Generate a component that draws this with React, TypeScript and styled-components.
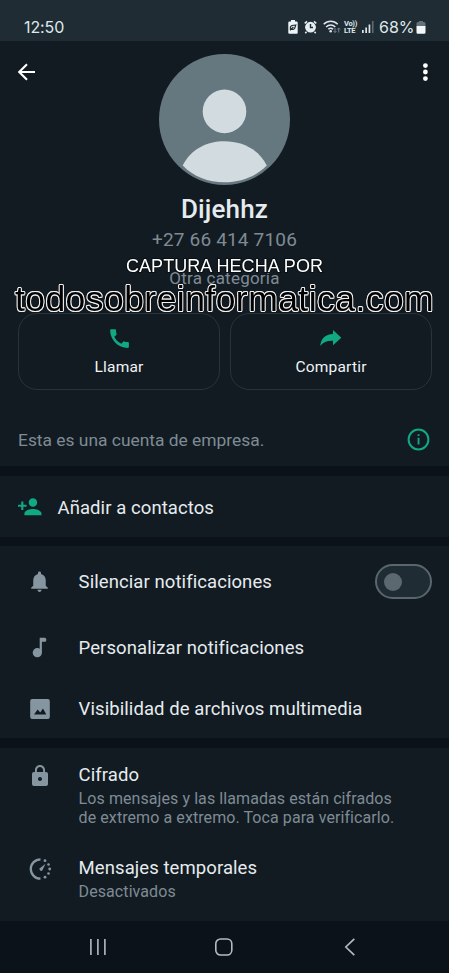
import React from "react";
import styled, { createGlobalStyle } from "styled-components";
import { MdCall, MdPersonAdd, MdNotifications, MdLock } from "react-icons/md";

const color = {
  panel: "#121b22",
  gap: "#0b1219",
  status: "#202c33",
  green: "#11a884",
  text: "#e6ebef",
  muted: "#7f8b94",
  icon: "#8696a0",
};

const GlobalStyle = createGlobalStyle`
  * { box-sizing: border-box; }
  body { margin: 0; background: ${color.gap}; font-family: Roboto, "Noto Sans", sans-serif; }
  svg { display: block; flex: none; }
`;

const Screen = styled.div`
  position: relative;
  width: 449px;
  height: 973px;
  overflow: hidden;
  display: flex;
  flex-direction: column;
  background: ${color.gap};
`;

const StatusBar = styled.header`
  height: 41px;
  flex: none;
  padding: 12px 23px 0 24px;
  display: flex;
  justify-content: space-between;
  align-items: flex-start;
  background: ${color.status};
  color: #dfe8ec;
`;

const Clock = styled.span`
  font: 400 16px/30px Inter, sans-serif;
  letter-spacing: -0.1px;
`;

const StatusIcons = styled.div`
  display: flex;
  align-items: center;
  height: 30px;
`;

const StatusSlot = styled.span<{ $gap: number }>`
  display: flex;
  margin-left: ${(p) => p.$gap}px;
`;

const Volte = styled.span`
  display: flex;
  flex-direction: column;
  width: 14px;
  margin-left: 3px;
  font: 700 7.5px/7px Roboto, sans-serif;
  letter-spacing: -0.3px;
  white-space: nowrap;
`;

const Percent = styled.span`
  margin-left: 5px;
  width: 36px;
  font: 400 16px/30px Inter, sans-serif;
`;

const Profile = styled.section`
  height: 425px;
  flex: none;
  padding-top: 13px;
  display: flex;
  flex-direction: column;
  align-items: center;
  background: ${color.panel};
`;

const ProfileTop = styled.div`
  width: 100%;
  display: grid;
  grid-template-columns: 1fr 131px 1fr;
  padding: 0 17px 0 16px;
`;

const IconButton = styled.button<{ $end?: boolean }>`
  width: 20px;
  height: 20px;
  margin-top: 8px;
  padding: 0;
  border: 0;
  background: none;
  justify-self: ${(p) => (p.$end ? "end" : "start")};
`;

const Name = styled.h1`
  margin: 10px 0 0;
  font-size: 26px;
  font-weight: 500;
  line-height: 28px;
  letter-spacing: 0.15px;
  color: ${color.text};
`;

const Phone = styled.div`
  margin-top: 5px;
  font-size: 19px;
  line-height: 24px;
  letter-spacing: 0.18px;
  color: ${color.muted};
`;

const Category = styled.div`
  margin-top: 15px;
  font-size: 17px;
  line-height: 22px;
  letter-spacing: 0.22px;
  color: ${color.muted};
`;

const Actions = styled.div`
  width: 100%;
  margin-top: 24px;
  padding: 0 17px 0 18px;
  display: grid;
  grid-template-columns: 1fr 1fr;
  gap: 10px;
`;

const ActionCard = styled.button`
  height: 77px;
  padding: 11px 0 0;
  display: flex;
  flex-direction: column;
  align-items: center;
  border: 1px solid #28333a;
  border-radius: 19px;
  background: transparent;
  color: ${color.green};
`;

const ActionIcon = styled.span`
  height: 26px;
  display: flex;
  align-items: center;
`;

const ActionLabel = styled.span`
  margin-top: 5px;
  font: 400 15.5px/22px Roboto, sans-serif;
  letter-spacing: 0.2px;
  color: #f0f4f7;
`;

const BusinessNote = styled.div`
  width: 100%;
  height: 51px;
  margin-top: 24px;
  padding: 0 19px 0 18px;
  display: flex;
  align-items: center;
  justify-content: space-between;
  font-size: 17.4px;
  color: ${color.muted};
`;

const Section = styled.section<{ $height: number; $gap: number }>`
  height: ${(p) => p.$height}px;
  margin-top: ${(p) => p.$gap}px;
  flex: none;
  display: flex;
  flex-direction: column;
  background: ${color.panel};
`;

const Title = styled.span`
  font-size: 18.5px;
  line-height: 24px;
  letter-spacing: 0.08px;
  white-space: nowrap;
  color: ${color.text};
`;

const ContactRow = styled.div`
  flex: 1;
  display: flex;
  align-items: center;
  padding-left: 17px;
  gap: 15px;
  color: ${color.green};
  > ${Title} { padding-top: 2px; }
`;

const SettingRow = styled.div<{ $height: number }>`
  height: ${(p) => p.$height}px;
  flex: none;
  padding: 0 17px 0 26px;
  display: grid;
  grid-template-columns: 27px 1fr auto;
  column-gap: 25.6px;
  align-items: center;
  color: ${color.icon};
`;

const DetailRow = styled.div<{ $top: number; $iconTop: number }>`
  margin-top: ${(p) => p.$top}px;
  padding-left: 26px;
  display: grid;
  grid-template-columns: 27px 1fr;
  column-gap: 25.6px;
  color: ${color.icon};
  > :first-child { margin-top: ${(p) => p.$iconTop}px; }
`;

const IconCell = styled.span`
  display: flex;
  justify-content: center;
`;

const Detail = styled.div<{ $gap: number }>`
  margin-top: ${(p) => p.$gap}px;
  font-size: 16px;
  line-height: 19.3px;
  letter-spacing: 0.08px;
  white-space: nowrap;
  color: ${color.muted};
`;

const Toggle = styled.button`
  width: 57px;
  height: 35px;
  padding: 0 0 0 7px;
  display: flex;
  align-items: center;
  border: 2px solid #59666d;
  border-radius: 18px;
  background: #1f2c33;
`;

const Knob = styled.span`
  width: 18px;
  height: 18px;
  border-radius: 50%;
  background: #5b6870;
`;

const NavBar = styled.nav`
  height: 52px;
  flex: none;
  padding: 0 89px 0 88px;
  display: flex;
  align-items: center;
  justify-content: space-between;
`;

const Watermark = styled.div`
  position: absolute;
  left: 0;
  top: 256px;
  width: 449px;
  display: flex;
  flex-direction: column;
  align-items: center;
  font-family: "Liberation Sans", Arial, sans-serif;
  white-space: nowrap;
  paint-order: stroke fill;
  pointer-events: none;
  will-change: transform;
`;

const Credit = styled.span`
  font-size: 18px;
  line-height: 21px;
  letter-spacing: 0.06px;
  color: #fff;
  -webkit-text-stroke: 2px #0a0f13;
`;

const Site = styled.span`
  margin-top: 2px;
  font-size: 35.5px;
  line-height: 40px;
  letter-spacing: 0.45px;
  color: #000;
  -webkit-text-stroke: 1.2px #000;
  text-shadow:
    1px 0 #f2f2f2, -1px 0 #f2f2f2, 0 1px #f2f2f2, 0 -1px #f2f2f2,
    0.7px 0.7px #f2f2f2, -0.7px 0.7px #f2f2f2, 0.7px -0.7px #f2f2f2, -0.7px -0.7px #f2f2f2;
`;

const BatterySaverIcon = () => (
  <svg width="10" height="14" viewBox="0 0 10 14">
    <path d="M3 0h4v1.5h1.5A1.2 1.2 0 0 1 9.7 2.7v10a1 1 0 0 1-1 1H1.3a1 1 0 0 1-1-1v-10a1.2 1.2 0 0 1 1.2-1.2H3z" fill="#edf4f7" />
    <path d="M7.8 5C4 5 2 6 2.3 8.3c.2 1.5 3.5 1.5 4.4-.1C7.3 7.2 7.2 6 7.8 5ZM2 10.2 5.4 7" fill="none" stroke={color.status} strokeWidth="1.2" />
  </svg>
);

const AlarmIcon = () => (
  <svg width="13" height="14" viewBox="0 0 13 14" fill="none">
    <circle cx="6.5" cy="7.2" r="5.4" fill="#e4edf1" />
    <path d="M6.5 4v3.5H9" stroke={color.status} strokeWidth="1.4" />
    <path d="m.7 3.3 2.4-2M12.3 3.3l-2.4-2M2.5 11.7l-1.2 1.5M10.5 11.7l1.2 1.5" stroke="#e4edf1" strokeWidth="1.5" />
  </svg>
);

const WifiIcon = () => (
  <svg width="18" height="14" viewBox="0 0 18 14" fill="none">
    <path d="M.7 4.3c4-4.1 10-4.1 14 0M3.1 7c2.7-2.7 6.5-2.7 9.2 0M5.3 9.3c1.5-1.4 3.3-1.4 4.8 0" stroke="#dce6ea" strokeWidth="1.5" />
    <circle cx="7.7" cy="11.3" r="1.3" fill="#dce6ea" />
    <path d="M12 8v4.5m-1.5-1.5 1.5 1.5 1.5-1.5M15.7 12.5V8m-1.5 1.5L15.7 8l1.5 1.5" stroke="#72808a" strokeWidth="1" />
  </svg>
);

const SignalIcon = () => (
  <svg width="12" height="12" viewBox="0 0 12 12">
    <path d="M0 9h1.7v3H0zM3.3 6.5H5V12H3.3zM6.6 3.5h1.7V12H6.6z" fill="#dce6ea" />
    <path d="M9.9 0h1.7v12H9.9z" fill="#5c6970" />
  </svg>
);

const BatteryIcon = () => (
  <svg width="10" height="13" viewBox="0 0 10 13">
    <path d="M3 0h4v1h1a1.5 1.5 0 0 1 1.5 1.5V5H.5V2.5A1.5 1.5 0 0 1 2 1h1z" fill="#66727a" />
    <path d="M.5 5h9v6.5A1.3 1.3 0 0 1 8.2 12.8H1.8A1.3 1.3 0 0 1 .5 11.5z" fill="#f2f7f9" />
  </svg>
);

const BackIcon = () => (
  <svg width="20" height="20" viewBox="0 0 20 20" fill="none" stroke="#fff" strokeWidth="2.1">
    <path d="M19 10H3.5M11 2.2 3.2 10l7.8 7.8" />
  </svg>
);

const MenuIcon = () => (
  <svg width="20" height="20" viewBox="0 0 20 20" fill="#fff">
    <circle cx="13.4" cy="3.6" r="2.4" />
    <circle cx="13.4" cy="10" r="2.4" />
    <circle cx="13.4" cy="16.6" r="2.4" />
  </svg>
);

const Avatar = () => (
  <svg width="131" height="131" viewBox="0 0 131 131">
    <circle cx="65.5" cy="65.5" r="65.5" fill="#65777f" />
    <circle cx="65.5" cy="57.4" r="21.8" fill="#d2dbe0" />
    <path d="M23.7 111.5C32 95 48 87.3 65.5 87.3S99.5 95 107.8 111.5C97 122.5 82 128.3 65.5 128.3S34.5 122.5 23.7 111.5Z" fill="#d2dbe0" />
  </svg>
);

const ShareIcon = () => (
  <svg width="22" height="16" viewBox="0 0 22 16" fill="currentColor">
    <path d="M13 0l8.3 7.7L13 15.2v-4.4C7.5 10.5 3.6 11.9.3 15.9.8 8.5 5.3 4.2 13 3.9z" />
  </svg>
);

const InfoIcon = () => (
  <svg width="23" height="23" viewBox="0 0 23 23">
    <circle cx="11.5" cy="11.5" r="9.9" fill="none" stroke={color.green} strokeWidth="2" />
    <path d="M10.6 9.8h1.9v6.7h-1.9zM10.6 6.2h1.9v1.9h-1.9z" fill={color.green} />
  </svg>
);

const NoteIcon = () => (
  <svg width="15" height="21" viewBox="0 0 15 21" fill="currentColor">
    <circle cx="5.3" cy="15.7" r="4.6" />
    <path d="M7.7.8h5a1.6 1.6 0 0 1 1.6 1.6v.9a1.5 1.5 0 0 1-1.5 1.5H9.9v11H7.7z" />
  </svg>
);

const MediaIcon = () => (
  <svg width="20" height="20" viewBox="0 0 20 20">
    <rect x=".2" width="19.6" height="20" rx="2" fill="currentColor" />
    <path d="M4 15.5l3.7-5 2.5 3 2.8-3.9 3.3 5.9z" fill={color.panel} />
  </svg>
);

const TimerIcon = () => (
  <svg width="24" height="24" viewBox="0 0 24 24" fill="currentColor">
    <path d="M12.5 2.3a9.7 9.7 0 1 0 0 19.4" fill="none" stroke="currentColor" strokeWidth="2.3" />
    <circle cx="17" cy="3.7" r="1.4" />
    <circle cx="20.5" cy="7.5" r="1.3" />
    <circle cx="21.7" cy="12" r="1.4" />
    <circle cx="20.5" cy="16.5" r="1.3" />
    <circle cx="17" cy="20.2" r="1.4" />
    <path d="M17.5 6.8l-3.2 6.700c-1.100 1.500-3.700-.8-2.400-2.200z" />
  </svg>
);

const RecentsIcon = () => (
  <svg width="20" height="18" viewBox="0 0 20 18" stroke="#b4bcc2" strokeWidth="1.6">
    <path d="M2.9 1v16M9.9 1v16M16.9 1v16" />
  </svg>
);

const HomeIcon = () => (
  <svg width="18" height="18" viewBox="0 0 18 18" fill="none" stroke="#b4bcc2" strokeWidth="1.6">
    <rect x=".8" y="1" width="16" height="16" rx="4.8" />
  </svg>
);

const ChevronIcon = () => (
  <svg width="20" height="18" viewBox="0 0 20 18" fill="none" stroke="#b4bcc2" strokeWidth="1.6">
    <path d="M14.3.8 5.8 9l8.500 8.200" />
  </svg>
);

const settings = [
  { label: "Silenciar notificaciones", icon: <MdNotifications size={25} />, height: 71, toggle: true },
  { label: "Personalizar notificaciones", icon: <NoteIcon />, height: 61 },
  { label: "Visibilidad de archivos multimedia", icon: <MediaIcon />, height: 61 },
];

export default function App() {
  return (
    <>
      <GlobalStyle />
      <Screen>
        <StatusBar>
          <Clock>12:50</Clock>
          <StatusIcons>
            <StatusSlot $gap={0}><BatterySaverIcon /></StatusSlot>
            <StatusSlot $gap={6}><AlarmIcon /></StatusSlot>
            <StatusSlot $gap={6}><WifiIcon /></StatusSlot>
            <Volte><span>Vo))</span><span>LTE</span></Volte>
            <StatusSlot $gap={4}><SignalIcon /></StatusSlot>
            <Percent>68%</Percent>
            <StatusSlot $gap={1}><BatteryIcon /></StatusSlot>
          </StatusIcons>
        </StatusBar>

        <Profile>
          <ProfileTop>
            <IconButton aria-label="Atrás"><BackIcon /></IconButton>
            <Avatar />
            <IconButton $end aria-label="Más opciones"><MenuIcon /></IconButton>
          </ProfileTop>
          <Name>Dijehhz</Name>
          <Phone>+27 66 414 7106</Phone>
          <Category>Otra categoría</Category>
          <Actions>
            <ActionCard>
              <ActionIcon><MdCall size={25} /></ActionIcon>
              <ActionLabel>Llamar</ActionLabel>
            </ActionCard>
            <ActionCard>
              <ActionIcon><ShareIcon /></ActionIcon>
              <ActionLabel>Compartir</ActionLabel>
            </ActionCard>
          </Actions>
          <BusinessNote>
            Esta es una cuenta de empresa.
            <InfoIcon />
          </BusinessNote>
        </Profile>

        <Section $height={61} $gap={10}>
          <ContactRow>
            <MdPersonAdd size={25.5} />
            <Title>Añadir a contactos</Title>
          </ContactRow>
        </Section>

        <Section $height={192} $gap={9}>
          {settings.map((s) => (
            <SettingRow key={s.label} $height={s.height}>
              <IconCell>{s.icon}</IconCell>
              <Title>{s.label}</Title>
              {s.toggle && <Toggle role="switch" aria-checked={false}><Knob /></Toggle>}
            </SettingRow>
          ))}
        </Section>

        <Section $height={173} $gap={10}>
          <DetailRow $top={15} $iconTop={1}>
            <IconCell><MdLock size={24} /></IconCell>
            <div>
              <Title>Cifrado</Title>
              <Detail $gap={2}>
                Los mensajes y las llamadas están cifrados
                <br />
                de extremo a extremo. Toca para verificarlo.
              </Detail>
            </div>
          </DetailRow>
          <DetailRow $top={28} $iconTop={1}>
            <IconCell><TimerIcon /></IconCell>
            <div>
              <Title>Mensajes temporales</Title>
              <Detail $gap={2}>Desactivados</Detail>
            </div>
          </DetailRow>
        </Section>

        <NavBar>
          <RecentsIcon />
          <HomeIcon />
          <ChevronIcon />
        </NavBar>

        <Watermark>
          <Credit>CAPTURA HECHA POR</Credit>
          <Site>todosobreinformatica.com</Site>
        </Watermark>
      </Screen>
    </>
  );
}
